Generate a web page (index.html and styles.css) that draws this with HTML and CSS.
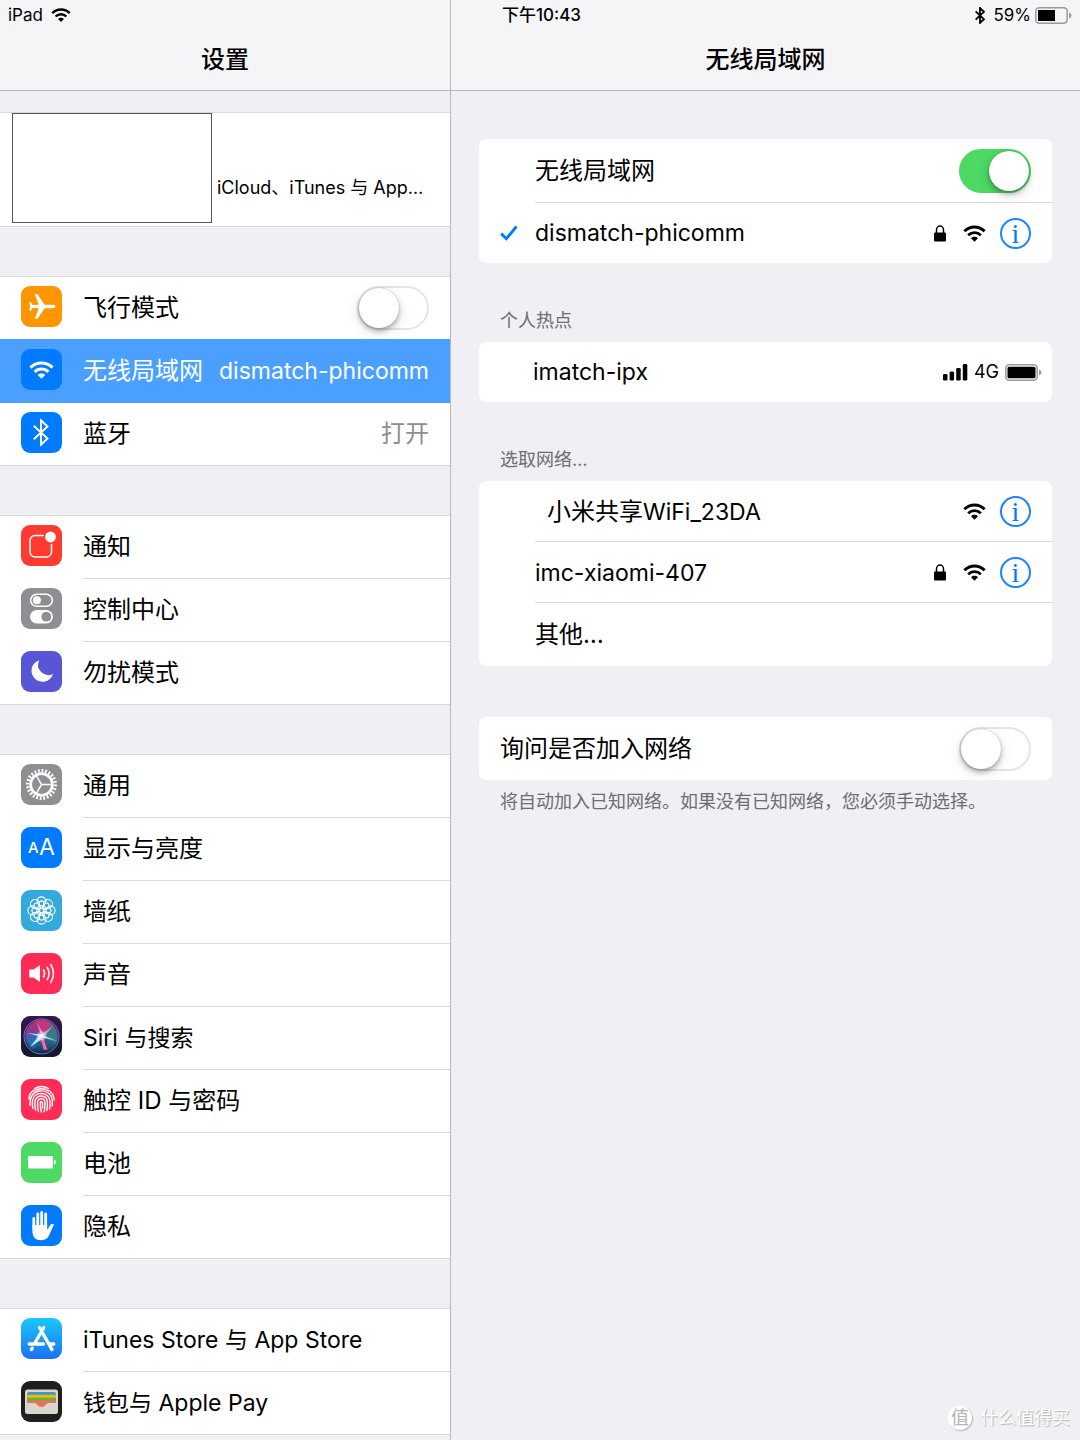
FILE: index.html
```html
<!DOCTYPE html>
<html lang="zh-CN">
<head>
<meta charset="utf-8">
<meta name="viewport" content="width=device-width, initial-scale=1">
<title>设置</title>
<link rel="stylesheet" href="styles.css">
</head>
<body>
<svg class="sprite" aria-hidden="true">
  <symbol id="wifi" viewBox="0 0 24 17">
    <path d="M1.400 6.200C7.400 .3 16.600 .3 22.600 6.200" fill="none" stroke="currentColor" stroke-width="3.100"/>
    <path d="M5.400 10.300C9.200 6.600 14.800 6.600 18.600 10.300" fill="none" stroke="currentColor" stroke-width="2.900"/>
    <path d="M8.400 13.400C10.400 11.500 13.600 11.500 15.600 13.400L12 17Z" fill="currentColor"/>
  </symbol>
  <symbol id="lock" viewBox="0 0 12 17">
    <rect x="0" y="7.500" width="12" height="9" rx="1" fill="currentColor"/>
    <path d="M2.500 8V5a3.500 3.900 0 0 1 7 0V8" fill="none" stroke="currentColor" stroke-width="1.500"/>
  </symbol>
  <symbol id="bluetooth" viewBox="0 0 16 28">
    <path d="M.8 7.200L14.500 20L8 26.200V1.800L14.500 8L.8 20.800" fill="none" stroke="currentColor"/>
  </symbol>
</svg>

<div class="screen">
  <section class="pane sidebar">
    <header class="bar">
      <div class="status status-left"><span>iPad</span><svg class="status-wifi"><use href="#wifi"/></svg></div>
      <h1 class="title">设置</h1>
    </header>

    <nav class="menu">
      <div class="group">
        <a class="profile" href="#account">
          <span class="avatar"></span>
          <span class="profile-text">iCloud、iTunes 与 App…</span>
        </a>
      </div>

      <div class="group">
        <div class="item">
          <svg class="icon" viewBox="0 0 41 41"><rect width="41" height="41" rx="9" fill="#ff9500"/><path d="M34.500 20.500c0-1.200-1.200-1.700-2.800-1.700H23.600L16.500 8.300h-2.700l4 10.500-6.200.3-2-3.100H8.400l.6 4.500-.6 4.500h1.200l2-3.100 6.200.3-4 10.500h2.700l7.100-10.500h8.100c1.600 0 2.800-.5 2.800-1.700Z" fill="#fff"/></svg>
          <div class="item-body"><label for="airplane">飞行模式</label><input class="switch" id="airplane" type="checkbox"></div>
        </div>
        <a class="item selected" href="#wlan" aria-current="page">
          <svg class="icon" viewBox="0 0 41 41"><rect width="41" height="41" rx="9" fill="#007aff"/><use href="#wifi" x="8" y="12" width="25" height="18" color="#fff"/></svg>
          <span class="item-body"><span>无线局域网</span><span class="latin">dismatch-phicomm</span></span>
        </a>
        <a class="item" href="#bluetooth-settings">
          <svg class="icon" viewBox="0 0 41 41"><rect width="41" height="41" rx="9" fill="#007aff"/><use href="#bluetooth" x="12" y="6.500" width="16" height="28" color="#fff" stroke-width="1.900"/></svg>
          <span class="item-body"><span>蓝牙</span><span class="value">打开</span></span>
        </a>
      </div>

      <div class="group">
        <a class="item" href="#notifications">
          <svg class="icon" viewBox="0 0 41 41"><rect width="41" height="41" rx="9" fill="#ff3b30"/><rect x="9" y="10.500" width="21.500" height="21.500" rx="5" fill="none" stroke="#fff" stroke-width="1.500"/><circle cx="29.500" cy="12" r="7" fill="#ff3b30"/><circle cx="29.500" cy="12" r="5.400" fill="#fff"/></svg>
          <span class="item-body"><span>通知</span></span>
        </a>
        <a class="item" href="#control-center">
          <svg class="icon" viewBox="0 0 41 41"><rect width="41" height="41" rx="9" fill="#8e8e93"/><rect x="9.700" y="6.200" width="21.600" height="12" rx="6" fill="none" stroke="#fff" stroke-width="1.500"/><circle cx="15.900" cy="12.200" r="4" fill="#fff"/><rect x="9" y="22" width="23" height="13.400" rx="6.700" fill="#fff"/><circle cx="25.300" cy="28.700" r="4.900" fill="#8e8e93"/></svg>
          <span class="item-body"><span>控制中心</span></span>
        </a>
        <a class="item" href="#do-not-disturb">
          <svg class="icon" viewBox="0 0 41 41"><rect width="41" height="41" rx="9" fill="#5856d6"/><path d="M18.200 9.200A11 11 0 1 0 32 23A10.300 10.300 0 0 1 18.200 9.200Z" fill="#fff"/></svg>
          <span class="item-body"><span>勿扰模式</span></span>
        </a>
      </div>

      <div class="group">
        <a class="item" href="#general">
          <svg class="icon" viewBox="0 0 41 41"><rect width="41" height="41" rx="9" fill="#8e8e93"/><g fill="none" stroke="#fff"><circle cx="20.500" cy="20.500" r="13.800" stroke-width="3.400" pathLength="48" stroke-dasharray="1 1"/><circle cx="20.500" cy="20.500" r="10.800" stroke-width="2.700"/><path d="M20.500 20.500H31M20.500 20.500L15.200 11.400M20.500 20.500L15.200 29.600" stroke-width="1.500"/></g></svg>
          <span class="item-body"><span>通用</span></span>
        </a>
        <a class="item" href="#display">
          <svg class="icon" viewBox="0 0 41 41"><rect width="41" height="41" rx="9" fill="#007aff"/><text class="glyph glyph-small" x="7" y="26" font-size="15">A</text><text class="glyph" x="18" y="28" font-size="23">A</text></svg>
          <span class="item-body"><span>显示与亮度</span></span>
        </a>
        <a class="item" href="#wallpaper">
          <svg class="icon" viewBox="0 0 41 41"><defs><g id="petal"><circle cx="20.500" cy="11.300" r="4.400"/><ellipse cx="20.500" cy="14.600" rx="2.500" ry="3.700"/></g></defs><rect width="41" height="41" rx="9" fill="#34aadc"/><g fill="none" stroke="#fff" stroke-width="1.100"><use href="#petal"/><use href="#petal" transform="rotate(45 20.500 20.500)"/><use href="#petal" transform="rotate(90 20.500 20.500)"/><use href="#petal" transform="rotate(135 20.500 20.500)"/><use href="#petal" transform="rotate(180 20.500 20.500)"/><use href="#petal" transform="rotate(225 20.500 20.500)"/><use href="#petal" transform="rotate(270 20.500 20.500)"/><use href="#petal" transform="rotate(315 20.500 20.500)"/><circle cx="20.500" cy="20.500" r="2.200"/></g></svg>
          <span class="item-body"><span>墙纸</span></span>
        </a>
        <a class="item" href="#sounds">
          <svg class="icon" viewBox="0 0 41 41"><rect width="41" height="41" rx="9" fill="#ff2d55"/><path d="M8.300 16.500h4.200L19 12.200V29L12.500 24.500H8.300Z" fill="#fff"/><path d="M22.300 16.500q2.400 4 0 8M26 14q4 6.500 0 13.200M29.500 11q6 9.500 0 19.200" fill="none" stroke="#fff" stroke-width="1.600"/></svg>
          <span class="item-body"><span>声音</span></span>
        </a>
        <a class="item" href="#siri">
          <svg class="icon" viewBox="0 0 41 41">
            <defs>
              <linearGradient id="siri-back" x1="0" y1="0" x2="0" y2="1"><stop offset="0" stop-color="#34184f"/><stop offset="1" stop-color="#101830"/></linearGradient>
              <linearGradient id="siri-orb" x1="0" y1="0" x2="0" y2="1"><stop offset="0" stop-color="#b42a72"/><stop offset=".45" stop-color="#7c3f9a"/><stop offset=".75" stop-color="#1b5f80"/><stop offset="1" stop-color="#182852"/></linearGradient>
              <radialGradient id="siri-glow"><stop offset="0" stop-color="#fff"/><stop offset="1" stop-color="#fff" stop-opacity="0"/></radialGradient>
            </defs>
            <rect width="41" height="41" rx="9" fill="url(#siri-back)"/>
            <circle cx="20.500" cy="20.500" r="16.500" fill="url(#siri-orb)"/>
            <path d="M20 20L5 17Q6 28 13 33Z" fill="#2c6fc4" opacity=".7"/>
            <path d="M20 20L31 8Q39 18 35 28Z" fill="#278b83" opacity=".75"/>
            <path d="M20 20L14 5Q25 2 31 8Z" fill="#d93a86" opacity=".6"/>
            <circle cx="20.500" cy="20.500" r="17.500" fill="none" stroke="#6b83b5" stroke-width="1"/>
            <path d="M20 18.500L16 7L22 17L32 10L24.500 19L20 20Z" fill="#ff9fcb" opacity=".8"/>
            <path d="M6 17L20 18.500L36 25L23 21.800L9 31L17.500 20Z" fill="#a5f8ff" opacity=".95"/>
            <path d="M19.500 21L22 21L26.500 34L22.500 33.500Z" fill="#ff62a5"/>
            <circle cx="20.500" cy="20" r="6" fill="url(#siri-glow)"/>
          </svg>
          <span class="item-body"><span class="latin">Siri 与搜索</span></span>
        </a>
        <a class="item" href="#touch-id">
          <svg class="icon" viewBox="0 0 41 41"><rect width="41" height="41" rx="9" fill="#ff2d55"/><g fill="none" stroke="#fff" stroke-width="1.400" stroke-linecap="round"><path d="M13.500 9.500Q20.500 5.500 27.500 9.500"/><path d="M7.800 20Q8.200 14 12.500 11.600Q20.500 7.600 28.500 12Q33 15.500 33.200 21"/><path d="M9 26.500Q8.500 13.500 18 12Q27.500 11 30.500 18Q32 22 31.200 27"/><path d="M11.800 29.500Q11.200 26 11.400 22Q12.500 14.600 20.500 14.400Q28.500 15 29 23Q29.200 27 28.500 30"/><path d="M14.600 31Q13.600 27 14 22Q15.500 17 20.500 17Q26 17.200 26.400 23Q26.600 28 25.800 31.500"/><path d="M17.400 32.500Q16 27 16.700 22.500Q17.500 19.600 20.500 19.600Q23.700 19.800 24 23.500Q24 29 23.200 32.800"/><path d="M20.400 33Q19 28 19.300 23.500Q20.400 21 21.500 24V29"/></g></svg>
          <span class="item-body"><span>触控 ID 与密码</span></span>
        </a>
        <a class="item" href="#battery">
          <svg class="icon" viewBox="0 0 41 41"><rect width="41" height="41" rx="9" fill="#4cd964"/><rect x="7" y="14" width="25" height="12.500" rx="1" fill="#fff"/><path d="M33 17.800q2 .8 2 2.500t-2 2.500Z" fill="#fff"/></svg>
          <span class="item-body"><span>电池</span></span>
        </a>
        <a class="item" href="#privacy">
          <svg class="icon" viewBox="0 0 41 41"><rect width="41" height="41" rx="9" fill="#007aff"/><g fill="none" stroke="#fff" stroke-width="2.800" stroke-linecap="round"><path d="M12.800 13.500V24M16.800 9V23M20.700 7.500V23M24.700 9V23"/></g><path d="M11.400 20H26.100V24.500C28 23.500 28.700 18.800 31.500 18.700C33 18.700 33 19.600 32.500 20.500L28.200 30C26.800 33.400 24.500 35.200 20.300 35.200C13 35.200 11.400 31 11.400 25Z" fill="#fff"/></svg>
          <span class="item-body"><span>隐私</span></span>
        </a>
      </div>

      <div class="group">
        <a class="item" href="#stores">
          <svg class="icon" viewBox="0 0 41 41"><defs><linearGradient id="store-back" x1="0" y1="0" x2="0" y2="1"><stop offset="0" stop-color="#1ac8fc"/><stop offset="1" stop-color="#1d6ff2"/></linearGradient></defs><rect width="41" height="41" rx="9" fill="url(#store-back)"/><g fill="none" stroke="#fff" stroke-width="3.300" stroke-linecap="round"><path d="M22.800 9.500L13.300 26M11.300 30.200L10.400 31.600M18.500 9.500L31 31.600M8.200 26H22.500M28 26H32.800"/></g></svg>
          <span class="item-body"><span class="latin">iTunes Store 与 App Store</span></span>
        </a>
        <a class="item" href="#wallet">
          <svg class="icon" viewBox="0 0 41 41"><rect width="41" height="41" rx="9" fill="#1f1f1f"/><rect x="4" y="8.500" width="33" height="24.500" rx="2.500" fill="#d9d6cc"/><path d="M6 14V13q0-2 2-2h25q2 0 2 2v1Z" fill="#3c99cf"/><path d="M6 13.800h29v3.200H6Z" fill="#ffb101"/><path d="M6 16.800h29v3.200H6Z" fill="#50be3d"/><path d="M6 19.600h29V22H27.500C25 22 24.500 26 20.500 26S16 22 13.500 22H6Z" fill="#f16c5e"/></svg>
          <span class="item-body"><span class="latin">钱包与 Apple Pay</span></span>
        </a>
      </div>
    </nav>
  </section>

  <main class="pane detail">
    <header class="bar">
      <div class="status status-right">
        <time class="clock">下午10:43</time>
        <span class="status-group">
          <svg class="status-bluetooth"><use href="#bluetooth"/></svg>
          <span>59%</span>
          <svg class="battery" viewBox="0 0 37 17"><rect x=".8" y=".8" width="31.400" height="15.400" rx="3.500" fill="none" stroke="#9a9a9c" stroke-width="1.500"/><rect x="3" y="3" width="17" height="11" fill="#000"/><path d="M34 5.500q2.500 1 2.500 3t-2.500 3Z" fill="#9a9a9c"/></svg>
        </span>
      </div>
      <h2 class="title">无线局域网</h2>
    </header>

    <div class="content">
      <div class="card">
        <div class="row tall indent lined"><label for="wlan">无线局域网</label><input class="switch" id="wlan" type="checkbox" checked></div>
        <div class="row indent">
          <svg class="check" viewBox="0 0 18 16"><path d="M1.200 8.600L6.300 13.700L16.500 1.500" fill="none" stroke="#007aff" stroke-width="2.900"/></svg>
          <span class="name latin">dismatch-phicomm</span>
          <svg class="lock"><use href="#lock"/></svg><svg class="wifi"><use href="#wifi"/></svg><button class="info" type="button" aria-label="详细信息">i</button>
        </div>
      </div>

      <h3 class="caption">个人热点</h3>
      <div class="card">
        <div class="row hotspot">
          <span class="name latin">imatch-ipx</span>
          <svg class="signal" viewBox="0 0 25 17"><g fill="#000"><rect x="0" y="10" width="4.500" height="6.500" rx="1.300"/><rect x="6.600" y="7.500" width="4.500" height="9" rx="1.300"/><rect x="13.200" y="4" width="4.500" height="12.500" rx="1.300"/><rect x="19.800" y="0" width="4.500" height="16.500" rx="1.300"/></g></svg>
          <span class="network">4G</span>
          <svg class="battery" viewBox="0 0 37 17"><rect x=".8" y=".8" width="31.400" height="15.400" rx="3.500" fill="none" stroke="#9a9a9c" stroke-width="1.500"/><rect x="2.500" y="2.800" width="28" height="11.400" rx="1.500" fill="#000"/><path d="M34 5.500q2.500 1 2.500 3t-2.500 3Z" fill="#9a9a9c"/></svg>
        </div>
      </div>

      <h3 class="caption">选取网络…</h3>
      <div class="card">
        <div class="row indent lined">
          <span class="name nested">小米共享<span class="latin">WiFi_23DA</span></span>
          <svg class="wifi"><use href="#wifi"/></svg><button class="info" type="button" aria-label="详细信息">i</button>
        </div>
        <div class="row indent lined">
          <span class="name latin">imc-xiaomi-407</span>
          <svg class="lock"><use href="#lock"/></svg><svg class="wifi"><use href="#wifi"/></svg><button class="info" type="button" aria-label="详细信息">i</button>
        </div>
        <a class="row tall indent" href="#other"><span class="name">其他…</span></a>
      </div>

      <div class="card ask">
        <div class="row tall"><label for="ask">询问是否加入网络</label><input class="switch" id="ask" type="checkbox"></div>
      </div>
      <p class="note">将自动加入已知网络。如果没有已知网络，您必须手动选择。</p>
    </div>
    <div class="watermark"><span class="seal">值</span><span>什么值得买</span></div>
  </main>
</div>
</body>
</html>
```
FILE: styles.css
```css
* {
  box-sizing: border-box;
}

body {
  margin: 0;
  background: #efeff4;
  color: #000;
  font-family: Inter, "Noto Sans CJK SC", sans-serif;
  font-size: 24px;
  line-height: 32px;
}

a {
  color: inherit;
  text-decoration: none;
}

svg {
  flex: none;
}

.sprite {
  position: absolute;
  width: 0;
  height: 0;
}

.latin {
  font-size: 23px;
}

.screen {
  display: grid;
  grid-template-columns: 5fr 7fr;
  min-height: 100vh;
}

.pane {
  min-width: 0;
}

.detail {
  position: relative;
  border-left: 1px solid #b9b9bd;
}

.bar {
  height: 91px;
  background: #f5f5f7;
  border-bottom: 1px solid #b9b9bd;
}

.status {
  display: flex;
  align-items: center;
  height: 30px;
  font-size: 17px;
  line-height: 30px;
}

.status-left {
  gap: 8px;
  padding-left: 8px;
}

.status-right {
  justify-content: space-between;
  padding: 0 8px 0 51px;
}

.status-group {
  display: flex;
  align-items: center;
  gap: 4px;
}

.status-wifi {
  width: 20px;
  height: 14px;
}

.status-bluetooth {
  width: 10px;
  height: 17px;
  margin-right: 4px;
  stroke-width: 3px;
}

.clock {
  font-weight: 500;
}

.battery {
  width: 37px;
  height: 17px;
}

.title {
  margin: 0;
  padding-top: 13px;
  font-size: 24px;
  font-weight: 500;
  line-height: 34px;
  text-align: center;
}

/* Sidebar */

.menu {
  display: flex;
  flex-direction: column;
  gap: 49px;
  padding-top: 21px;
}

.group {
  background: #fff;
  border-top: 1px solid #d9d9dd;
}

.profile {
  display: flex;
  align-items: flex-end;
  gap: 5px;
  height: 114px;
  padding: 0 12px 3px;
  border-bottom: 1px solid #d9d9dd;
}

.avatar {
  flex: none;
  width: 200px;
  height: 110px;
  border: 1px solid #555;
}

.profile-text {
  padding-bottom: 19px;
  font-size: 18px;
  white-space: nowrap;
}

.item {
  display: flex;
  gap: 21px;
  height: 63px;
  padding-left: 21px;
}

.item:last-child {
  border-bottom: 1px solid #d9d9dd;
}

.icon {
  width: 41px;
  height: 41px;
  margin-top: 9px;
}

.glyph {
  fill: #fff;
  font-family: Inter, sans-serif;
}

.glyph-small {
  font-weight: 500;
}

.item-body {
  display: flex;
  flex: 1;
  align-items: center;
  justify-content: space-between;
  padding-right: 21px;
  border-bottom: 1px solid #d9d9dd;
  white-space: nowrap;
}

.item:last-child .item-body {
  border-bottom: 0;
}

.selected {
  position: relative;
  height: 64px;
  margin-top: -1px;
  padding-top: 1px;
  background: #4ba0ff;
  color: #fff;
}

.selected .item-body {
  border-color: #4ba0ff;
}

.value {
  color: #8e8e93;
}

/* Controls */

.switch {
  appearance: none;
  flex: none;
  width: 72px;
  height: 44px;
  margin: 0;
  border: 2px solid #e5e5e5;
  border-radius: 22px;
  background: #fff;
}

.switch::before {
  content: "";
  display: block;
  width: 40px;
  height: 40px;
  border-radius: 50%;
  background: #fff;
  box-shadow: 0 3px 5px rgba(0, 0, 0, 0.28), 0 4px 14px rgba(0, 0, 0, 0.12), 0 0 1px rgba(0, 0, 0, 0.3);
}

.switch:checked {
  border-color: #4cd964;
  background: #4cd964;
}

.switch:checked::before {
  margin-left: auto;
}

.info {
  flex: none;
  width: 31px;
  height: 31px;
  padding: 0;
  border: 2px solid #1a85ff;
  border-radius: 50%;
  background: none;
  color: #007aff;
  font-family: "Liberation Serif", serif;
  font-size: 28px;
  line-height: 25px;
  text-align: center;
}

/* Detail pane */

.content {
  display: flex;
  flex-direction: column;
  padding: 48px 28px;
}

.card {
  overflow: hidden;
  border-radius: 7px;
  background: #fff;
}

.row {
  position: relative;
  display: flex;
  align-items: center;
  height: 60px;
  padding: 0 21px;
}

.tall {
  height: 63px;
  justify-content: space-between;
}

.indent {
  padding-left: 56px;
}

.row.lined {
  height: 61px;
}

.tall.lined {
  height: 64px;
}

.lined::after {
  content: "";
  position: absolute;
  right: 0;
  bottom: 0;
  left: 56px;
  height: 1px;
  background: #d9d9dd;
}

.name {
  flex: 1;
  white-space: nowrap;
}

.nested {
  padding-left: 12px;
}

.check {
  width: 18px;
  height: 16px;
  margin: 0 17px 0 -35px;
}

.lock {
  width: 12px;
  height: 17px;
  margin-right: 17px;
}

.wifi {
  width: 23px;
  height: 17px;
  margin-right: 14px;
}

.hotspot {
  gap: 6px;
  padding: 0 10px 0 54px;
}

.signal {
  width: 25px;
  height: 17px;
}

.network {
  font-size: 18px;
}

.caption {
  margin: 0;
  padding: 44px 21px 7px;
  color: #6d6d72;
  font-size: 18px;
  font-weight: 400;
  line-height: 28px;
}

.ask {
  margin-top: 51px;
}

.note {
  margin: 0;
  padding: 8px 21px;
  color: #6d6d72;
  font-size: 18px;
  line-height: 28px;
}

.watermark {
  position: absolute;
  right: 10px;
  bottom: 8px;
  display: flex;
  align-items: center;
  gap: 8px;
  color: #fff;
  font-size: 18px;
  line-height: 28px;
  text-shadow: 1px 1px 1px #b4b4b8;
}

.seal {
  width: 24px;
  height: 24px;
  border-radius: 50%;
  background: #fff;
  box-shadow: 1px 1px 1px #b4b4b8;
  color: #b4b4b8;
  line-height: 24px;
  text-align: center;
  text-shadow: none;
}
```
